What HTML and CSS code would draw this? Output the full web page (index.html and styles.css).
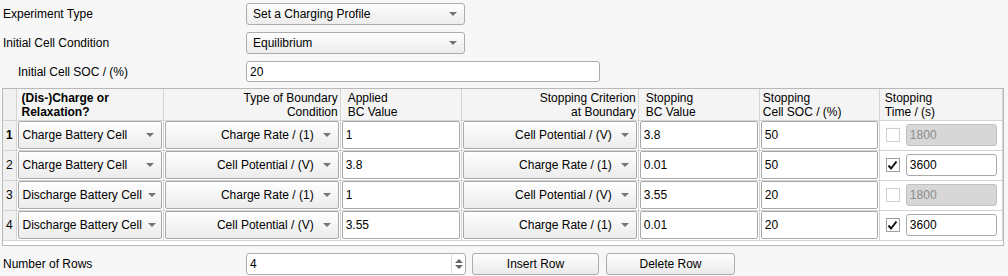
FILE: index.html
```html
<!DOCTYPE html>
<html lang="en">
<head>
  <meta charset="UTF-8" />
  <title>Experiment Settings</title>
  <link rel="stylesheet" href="styles.css">
</head>
<body>

  <div class="form">
    <div class="label">Experiment Type</div>
    <div class="combo top-combo"><span class="combo-text">Set a Charging Profile</span><span class="arrow"></span></div>

    <div class="label">Initial Cell Condition</div>
    <div class="combo top-combo"><span class="combo-text">Equilibrium</span><span class="arrow"></span></div>

    <div class="label indent">Initial Cell SOC / (%)</div>
    <div class="field soc-field">20</div>
  </div>

  <div class="table-wrap">
    <table class="grid">
      <colgroup>
        <col style="width:13px">
        <col style="width:147px">
        <col style="width:177px">
        <col style="width:121px">
        <col style="width:177px">
        <col style="width:121px">
        <col style="width:120px">
        <col style="width:123px">
      </colgroup>
      <thead>
        <tr>
          <th class="rownum"></th>
          <th class="bold">(Dis-)Charge or<br>Relaxation?</th>
          <th class="right">Type of Boundary<br>Condition</th>
          <th class="wide-pad">Applied<br>BC Value</th>
          <th class="right">Stopping Criterion<br>at Boundary</th>
          <th class="wide-pad">Stopping<br>BC Value</th>
          <th class="narrow-pad">Stopping<br>Cell SOC / (%)</th>
          <th>Stopping<br>Time / (s)</th>
        </tr>
      </thead>
      <tbody>
        <tr>
          <td class="rownum bold">1</td>
          <td><div class="combo cell-combo"><span class="combo-text">Charge Battery Cell</span><span class="arrow"></span></div></td>
          <td><div class="combo cell-combo right"><span class="combo-text">Charge Rate / (1)</span><span class="arrow"></span></div></td>
          <td><div class="field cell-field">1</div></td>
          <td><div class="combo cell-combo right"><span class="combo-text">Cell Potential / (V)</span><span class="arrow"></span></div></td>
          <td><div class="field cell-field">3.8</div></td>
          <td><div class="field cell-field">50</div></td>
          <td><div class="time-cell"><span class="check off"></span><div class="field time-field disabled">1800</div></div></td>
        </tr>
        <tr>
          <td class="rownum">2</td>
          <td><div class="combo cell-combo"><span class="combo-text">Charge Battery Cell</span><span class="arrow"></span></div></td>
          <td><div class="combo cell-combo right"><span class="combo-text">Cell Potential / (V)</span><span class="arrow"></span></div></td>
          <td><div class="field cell-field">3.8</div></td>
          <td><div class="combo cell-combo right"><span class="combo-text">Charge Rate / (1)</span><span class="arrow"></span></div></td>
          <td><div class="field cell-field">0.01</div></td>
          <td><div class="field cell-field">50</div></td>
          <td><div class="time-cell"><span class="check on"><svg width="11" height="11" viewBox="0 0 11 11"><path d="M1.5 5.5 L4 8.5 L9.5 1.5" fill="none" stroke="#111" stroke-width="2"/></svg></span><div class="field time-field">3600</div></div></td>
        </tr>
        <tr>
          <td class="rownum">3</td>
          <td><div class="combo cell-combo"><span class="combo-text">Discharge Battery Cell</span><span class="arrow"></span></div></td>
          <td><div class="combo cell-combo right"><span class="combo-text">Charge Rate / (1)</span><span class="arrow"></span></div></td>
          <td><div class="field cell-field">1</div></td>
          <td><div class="combo cell-combo right"><span class="combo-text">Cell Potential / (V)</span><span class="arrow"></span></div></td>
          <td><div class="field cell-field">3.55</div></td>
          <td><div class="field cell-field">20</div></td>
          <td><div class="time-cell"><span class="check off"></span><div class="field time-field disabled">1800</div></div></td>
        </tr>
        <tr>
          <td class="rownum">4</td>
          <td><div class="combo cell-combo"><span class="combo-text">Discharge Battery Cell</span><span class="arrow"></span></div></td>
          <td><div class="combo cell-combo right"><span class="combo-text">Cell Potential / (V)</span><span class="arrow"></span></div></td>
          <td><div class="field cell-field">3.55</div></td>
          <td><div class="combo cell-combo right"><span class="combo-text">Charge Rate / (1)</span><span class="arrow"></span></div></td>
          <td><div class="field cell-field">0.01</div></td>
          <td><div class="field cell-field">20</div></td>
          <td><div class="time-cell"><span class="check on"><svg width="11" height="11" viewBox="0 0 11 11"><path d="M1.5 5.5 L4 8.5 L9.5 1.5" fill="none" stroke="#111" stroke-width="2"/></svg></span><div class="field time-field">3600</div></div></td>
        </tr>
      </tbody>
    </table>
  </div>

  <div class="bottom">
    <div class="label">Number of Rows</div>
    <div class="field spin">
      <span class="spin-text">4</span>
      <span class="spin-arrows"><span class="up"></span><span class="down"></span></span>
    </div>
    <div class="button insert">Insert Row</div>
    <div class="button delete">Delete Row</div>
  </div>

</body>
</html>
```

FILE: styles.css
```css
body {
  margin: 0;
  background-color: #f7f7f7;
  color: #000;
  font-family: "Liberation Sans", Arial, sans-serif;
  font-size: 12px;
}
.form {
  display: grid;
  grid-template-columns: 243px auto;
  row-gap: 7px;
  padding: 3px 0 0 3px;
  align-items: center;
}
.label {
  line-height: 14px;
}
.indent {
  padding-left: 15px;
}
.combo {
  display: flex;
  align-items: center;
  box-sizing: border-box;
  border: 1px solid #acacac;
  border-radius: 3px;
  background: linear-gradient(#fefefe, #ececec);
}
.combo-text {
  flex: 1;
  white-space: nowrap;
}
.arrow {
  flex: none;
  width: 0;
  height: 0;
  border-left: 4px solid transparent;
  border-right: 4px solid transparent;
  border-top: 4px solid #747474;
}
.top-combo {
  width: 219px;
  height: 22px;
  padding: 0 7px 0 6px;
}
.field {
  box-sizing: border-box;
  background: #fff;
  border: 1px solid #acacac;
  border-radius: 3px;
  display: flex;
  align-items: center;
  padding-left: 3px;
}
.soc-field {
  width: 354px;
  height: 21px;
}
.table-wrap {
  margin: 6px 0 0 2px;
  width: 1002px;
  height: 158px;
  box-sizing: border-box;
  border: 1px solid #b8b8b8;
  background: #fff;
}
.grid {
  border-collapse: collapse;
  table-layout: fixed;
  width: 1000px;
}
.grid th {
  background: #f4f4f4;
  border-right: 1px solid #d4d4d4;
  border-bottom: 1px solid #d4d4d4;
  font-weight: normal;
  text-align: left;
  vertical-align: top;
  padding: 2px 4px 0 5px;
  line-height: 14px;
  white-space: nowrap;
}
.grid thead tr {
  height: 31px;
}
.grid tbody tr {
  height: 30px;
}
.grid th.bold,
.grid td.bold {
  font-weight: bold;
}
.grid th.right {
  text-align: right;
  padding-right: 2px;
}
.grid th.wide-pad {
  padding-left: 7px;
}
.grid th.narrow-pad {
  padding-left: 3px;
}
.grid td {
  padding: 0 1px;
  border-right: 1px solid #d4d4d4;
  border-bottom: 1px solid #d4d4d4;
}
.grid .rownum {
  background: #f0f0f0;
  padding: 0 0 0 3px;
}
.grid th.rownum {
  padding: 0;
}
.cell-combo {
  height: 28px;
  border-color: #a9a9a9;
  border-radius: 2px;
  padding: 0 7px 0 4px;
}
.cell-combo .combo-text {
  padding-right: 6px;
}
.cell-combo.right .combo-text {
  text-align: right;
  padding-right: 9px;
}
.cell-field {
  height: 28px;
  border-color: #a9a9a9;
  border-radius: 2px;
  padding-left: 3px;
}
.time-cell {
  display: flex;
  align-items: center;
  gap: 6px;
  padding-left: 5px;
}
.check {
  width: 14px;
  height: 14px;
  box-sizing: border-box;
  display: flex;
  align-items: center;
  justify-content: center;
  background: #fff;
}
.check.off {
  border: 1px solid #cfcfcf;
}
.check.on {
  border: 1px solid #a0a0a0;
}
.time-field {
  width: 91px;
  height: 22px;
  border-color: #a9a9a9;
  border-radius: 3px;
}
.time-field.disabled {
  background: #d7d7d7;
  color: #8c8c8c;
  border-color: #c0c0c0;
}
.bottom {
  display: flex;
  align-items: center;
  margin-top: 7px;
  padding-left: 3px;
}
.bottom .label {
  width: 243px;
}
.spin {
  width: 220px;
  height: 22px;
  padding-right: 2px;
}
.spin-text {
  flex: 1;
}
.spin-arrows {
  display: flex;
  flex-direction: column;
  gap: 2px;
  padding-left: 3px;
  border-left: 1px solid #dcdcdc;
  height: 18px;
  justify-content: center;
}
.spin-arrows .up {
  border-left: 4px solid transparent;
  border-right: 4px solid transparent;
  border-bottom: 4px solid #666;
}
.spin-arrows .down {
  border-left: 4px solid transparent;
  border-right: 4px solid transparent;
  border-top: 4px solid #666;
}
.button {
  box-sizing: border-box;
  height: 22px;
  border: 1px solid #acacac;
  border-radius: 3px;
  background: linear-gradient(#fdfdfd, #eaeaea);
  display: flex;
  align-items: center;
  justify-content: center;
}
.insert {
  width: 127px;
  margin-left: 6px;
}
.delete {
  width: 129px;
  margin-left: 7px;
}
```
